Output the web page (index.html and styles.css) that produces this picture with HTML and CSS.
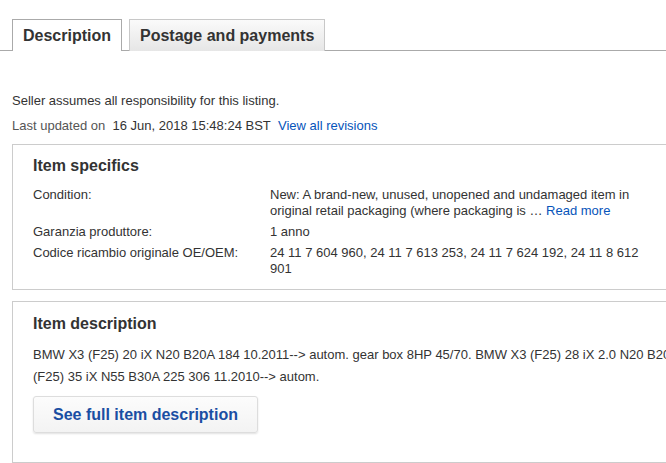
FILE: index.html
```html
<!DOCTYPE html>
<html lang="en">
<head>
  <meta charset="UTF-8" />
  <title>Item description</title>
  <link rel="stylesheet" href="styles.css">
</head>
<body>

  <div class="tabs">
    <div class="tab active">Description</div>
    <div class="tab">Postage and payments</div>
  </div>

  <div class="intro">
    <p>Seller assumes all responsibility for this listing.</p>
    <p class="updated">
      <span class="muted">Last updated on</span>&nbsp; 16 Jun, 2018 15:48:24 BST&nbsp;
      <a href="#">View all revisions</a>
    </p>
  </div>

  <!-- ITEM SPECIFICS -->
  <div class="card">
    <h2>Item specifics</h2>
    <div class="specs">
      <div class="label">Condition:</div>
      <div class="value">New: A brand-new, unused, unopened and undamaged item in original retail packaging (where packaging is &hellip; <a href="#">Read more</a></div>
      <div class="label">Garanzia produttore:</div>
      <div class="value">1 anno</div>
      <div class="label">Codice ricambio originale OE/OEM:</div>
      <div class="value">24 11 7 604 960, 24 11 7 613 253, 24 11 7 624 192, 24 11 8 612 901</div>
    </div>
  </div>

  <!-- ITEM DESCRIPTION -->
  <div class="card">
    <h2>Item description</h2>
    <p class="desc">BMW X3 (F25) 20 iX N20 B20A 184 10.2011--&gt; autom. gear box 8HP 45/70. BMW X3 (F25) 28 iX 2.0 N20 B20A 245 10.2011--&gt; autom. BMW X3<br>(F25) 35 iX N55 B30A 225 306 11.2010--&gt; autom.</p>
    <button class="more">See full item description</button>
  </div>

</body>
</html>
```

FILE: styles.css
```css
body {
  font-family: "Liberation Sans", Arial, sans-serif;
  color: #333;
  background: #fff;
  margin: 0;
  padding: 0 0 0 12px;
  overflow: hidden;
  font-size: 13px;
}

a {
  color: #0654ba;
  text-decoration: none;
}

.tabs {
  display: flex;
  gap: 7px;
  margin: 19px 0 0 -12px;
  padding-left: 12px;
  border-bottom: 1px solid #aaa;
  width: 700px;
}

.tab {
  height: 30px;
  line-height: 31px;
  padding: 0 10px 1px;
  font-size: 16px;
  font-weight: bold;
  color: #333;
  border: 1px solid #c8c8c8;
  border-bottom: none;
  background: linear-gradient(#fafafa, #e6e6e6);
  margin-bottom: -1px;
}

.tab.active {
  background: #fff;
  border-color: #aaa;
}

.intro {
  padding-top: 42px;
}

.intro p {
  margin: 0;
  line-height: 16px;
}

.intro .updated {
  margin-top: 9px;
}

.muted {
  color: #555;
}

.card {
  width: 700px;
  border: 1px solid #ccc;
  padding: 11px 20px 12px;
  margin-top: 10px;
}

.card + .card {
  margin-top: 11px;
  padding-top: 12px;
  padding-bottom: 29px;
}

.card h2 {
  font-size: 16px;
  line-height: 20px;
  margin: 0 0 11px;
}

.card + .card h2 {
  margin-bottom: 10px;
}

.specs {
  display: grid;
  grid-template-columns: 237px 382px;
  row-gap: 5px;
  line-height: 16px;
}

.desc {
  margin: 0 0 9px;
  line-height: 21.5px;
  white-space: nowrap;
}

.more {
  font-family: inherit;
  font-size: 16px;
  font-weight: bold;
  color: #1a4ea3;
  background: linear-gradient(#fcfcfc, #f3f3f3);
  border: 1px solid #ddd;
  border-radius: 3px;
  box-shadow: 0 1px 2px rgba(0, 0, 0, 0.12);
  height: 37px;
  padding: 0 19px;
  cursor: pointer;
}
```
